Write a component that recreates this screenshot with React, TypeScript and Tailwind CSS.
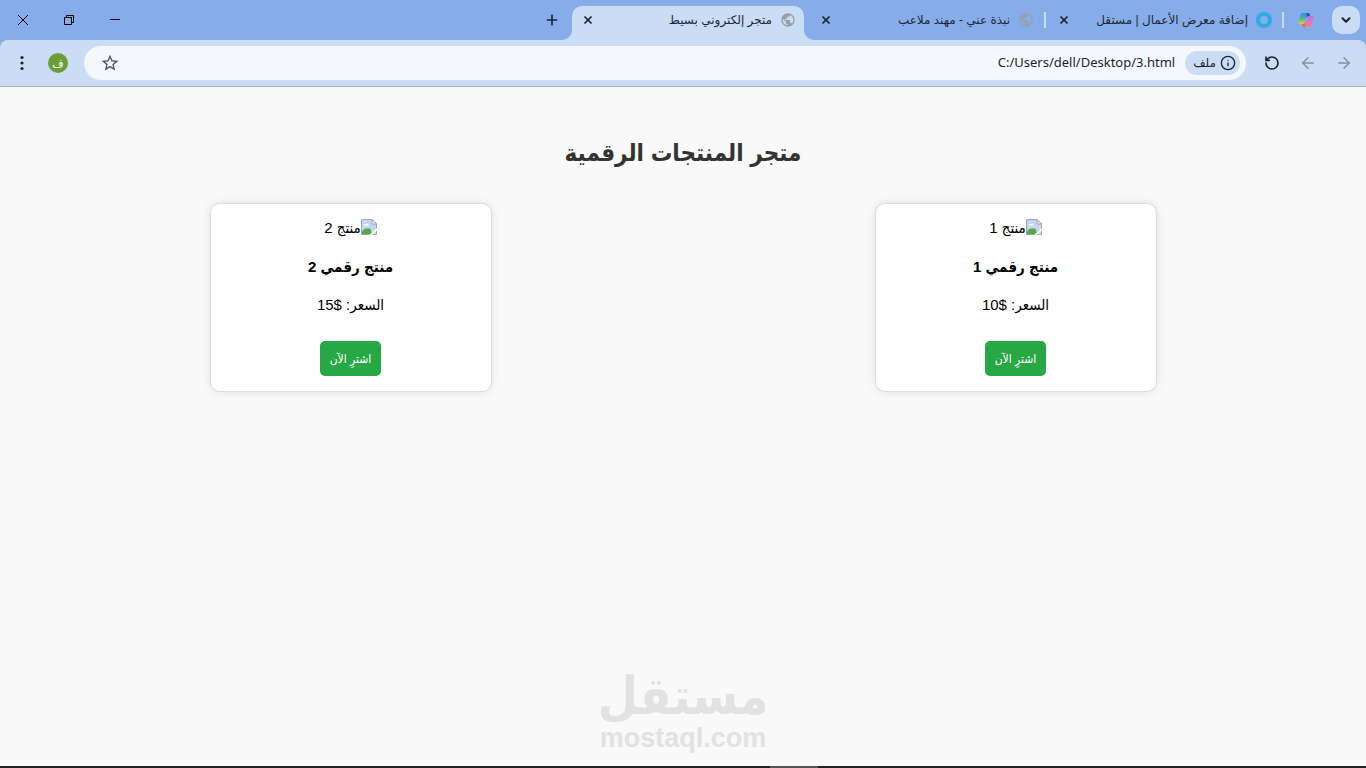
import { ArrowLeft, ArrowRight, ChevronDown, Info, Plus, RotateCcw, X } from 'lucide-react';
import { MdPublic, MdStarOutline } from 'react-icons/md';

type TabData = {
  title: string;
  icon: 'ring' | 'globe';
  active?: boolean;
};

type Product = {
  id: number;
  alt: string;
  name: string;
  price: string;
};

const tabs: TabData[] = [
  { title: 'إضافة معرض الأعمال | مستقل', icon: 'ring' },
  { title: 'نبذة عني - مهند ملاعب', icon: 'globe' },
  { title: 'متجر إلكتروني بسيط', icon: 'globe', active: true },
];

const products: Product[] = [
  { id: 1, alt: 'منتج 1', name: 'منتج رقمي 1', price: 'السعر: $10' },
  { id: 2, alt: 'منتج 2', name: 'منتج رقمي 2', price: 'السعر: $15' },
];

const RingIcon = () => (
  <svg viewBox="0 0 16 16" className="size-4 shrink-0" aria-hidden="true">
    <circle cx="8" cy="8" r="6" fill="none" stroke="#2caae6" strokeWidth="4" />
  </svg>
);

const CopilotIcon = () => (
  <svg viewBox="0 0 16 16" className="size-4" aria-hidden="true">
    <defs>
      <linearGradient id="copilot-left" x1="0" y1="0" x2="0" y2="1">
        <stop offset="0" stopColor="#2a8fe6" />
        <stop offset="0.5" stopColor="#45b79a" />
        <stop offset="1" stopColor="#f0c93a" />
      </linearGradient>
      <linearGradient id="copilot-right" x1="0" y1="0" x2="0" y2="1">
        <stop offset="0" stopColor="#a37af0" />
        <stop offset="0.5" stopColor="#e070cc" />
        <stop offset="1" stopColor="#f8835f" />
      </linearGradient>
    </defs>
    <path d="M5 1h5L7.200 9.800C6.800 11.200 6 12 5 12H2.500C.8 12 .1 10.500.6 9L2.400 3C2.800 1.700 3.700 1 5 1z" fill="url(#copilot-left)" />
    <path d="M11 15H6L8.800 6.200C9.200 4.800 10 4 11 4h2.500c1.700 0 2.400 1.500 1.900 3l-1.800 6c-.4 1.300-1.300 2-2.600 2z" fill="url(#copilot-right)" />
    <path d="M8.500 1H10c1 0 1.400.6 1.700 1.500L12 4h-1c-1 0-1.700.6-2.100 1.800z" fill="#2550bf" />
    <path d="M7.500 15H6c-1 0-1.400-.6-1.700-1.500L4 12h1c1 0 1.700-.6 2.100-1.800z" fill="#f0684f" />
    <path d="M8.100 6.200h1.400L8 10.200H6.500z" fill="#86ade9" />
  </svg>
);

const BrokenImage = () => (
  <svg viewBox="0 0 16 16" className="size-4 shrink-0" aria-hidden="true">
    <path d="M.5.5H11L15.500 5v10.500H.5z" fill="#c3d6f5" stroke="#a0a4aa" />
    <path d="M2.500 6.500c0-1.500 1.500-2 2.300-1 .7-1.500 3.200-1 3 1z" fill="#fff" />
    <path d="M1 15v-2.500C3 9.500 6 8.500 9.500 9.800L11 15z" fill="#58a846" />
    <path d="M16 9 8.500 16H11l5-4.500z" fill="#fff" />
    <path d="M11 .5V5h4.500z" fill="#f2f4f7" stroke="#a0a4aa" />
  </svg>
);

const TabCurve = ({ className }: { className: string }) => (
  <svg viewBox="0 0 10 10" className={`absolute bottom-0 size-2.5 ${className}`} aria-hidden="true">
    <path d="M10 0v10H0A10 10 0 0 0 10 0z" fill="#cbdcf5" />
  </svg>
);

const BrowserTab = ({ tab }: { tab: TabData }) => (
  <div
    className={`relative flex w-58 min-w-0 items-center self-stretch px-2 pb-1.5 ${
      tab.active ? 'rounded-t-[10px] bg-[#cbdcf5]' : ''
    }`}
  >
    {tab.active && (
      <>
        <TabCurve className="-left-2.5" />
        <TabCurve className="-right-2.5 -scale-x-100" />
      </>
    )}
    {tab.icon === 'ring' ? (
      <RingIcon />
    ) : (
      <MdPublic className={`size-4 shrink-0 ${tab.active ? 'text-[#9a9da2]' : 'text-[#96a0ae]'}`} />
    )}
    <span className="mr-2 min-w-0 flex-1 truncate text-xs text-[#1d2735]">{tab.title}</span>
    <button type="button" aria-label="إغلاق علامة التبويب" className="flex size-4 shrink-0 items-center justify-center text-[#1c2430]">
      <X className="size-3" strokeWidth={3.5} />
    </button>
  </div>
);

const TabStrip = () => (
  <div className="flex h-10 items-stretch pr-1.5 pt-1.5">
    <button type="button" aria-label="البحث في علامات التبويب" className="flex size-7 items-center justify-center rounded-[10px] bg-[#cbdcf5] text-[#1c2430]">
      <ChevronDown className="size-3.5" strokeWidth={3.5} />
    </button>
    <div className="mr-4.5 flex h-7 items-center">
      <CopilotIcon />
    </div>
    <div className="mr-3.5 flex gap-0.5">
      {tabs.map((tab) => (
        <div key={tab.title} className="flex gap-0.5">
          <span className={`mt-1.5 h-4 w-0.5 ${tab.active ? '' : 'bg-[#cbdcf5]'}`} />
          <BrowserTab tab={tab} />
        </div>
      ))}
    </div>
    <button type="button" aria-label="علامة تبويب جديدة" className="mr-3 flex h-7 w-4 items-center justify-center text-[#1c2430]">
      <Plus className="size-4" strokeWidth={2.5} />
    </button>
    <div className="mr-auto flex h-7 text-black">
      <button type="button" aria-label="تصغير" className="flex w-11.5 items-center justify-center">
        <svg viewBox="0 0 10 10" className="size-2.5" shapeRendering="crispEdges">
          <path d="M0 4.500h10" stroke="currentColor" />
        </svg>
      </button>
      <button type="button" aria-label="استعادة" className="flex w-11.5 items-center justify-center">
        <svg viewBox="0 0 10 10" className="size-2.5" fill="none" stroke="currentColor">
          <path d="M.5 2.500h7v7h-7zM2.500 2.500v-2h7v7h-2" />
        </svg>
      </button>
      <button type="button" aria-label="إغلاق" className="flex w-11.5 items-center justify-center">
        <svg viewBox="0 0 10 10" className="size-2.5" fill="none" stroke="currentColor">
          <path d="M0 0l10 10M10 0L0 10" />
        </svg>
      </button>
    </div>
  </div>
);

const Toolbar = () => (
  <div className="flex items-center rounded-t-lg border-b border-[#a3b1c7] bg-[#cbdcf5] py-1.5 pl-3.5 pr-[13px]">
    <div className="flex gap-4.5">
      <button type="button" aria-label="إلى الأمام" className="text-[#8390a5]">
        <ArrowRight className="size-4.5" />
      </button>
      <button type="button" aria-label="رجوع" className="text-[#8390a5]">
        <ArrowLeft className="size-4.5" />
      </button>
      <button type="button" aria-label="إعادة التحميل" className="flex size-4.5 items-center justify-center text-[#1c2430]">
        <RotateCcw className="size-4" strokeWidth={2.5} />
      </button>
    </div>
    <div className="mr-[17px] flex h-8.5 min-w-0 flex-1 items-center rounded-full bg-[#f4f8fd] pl-4 pr-1.5">
      <button type="button" className="flex h-6 shrink-0 items-center gap-1 rounded-full bg-[#cbdcf5] pl-2 pr-1 text-xs font-medium text-[#1c2430]">
        <Info className="size-4" />
        ملف
      </button>
      <input
        type="text"
        aria-label="شريط العناوين"
        dir="ltr"
        defaultValue="C:/Users/dell/Desktop/3.html"
        className="mr-2.5 min-w-0 flex-1 bg-transparent text-right font-['Noto_Sans','Open_Sans',sans-serif] text-[13px] text-[#1f2329] outline-none"
      />
      <button type="button" aria-label="إضافة إشارة مرجعية" className="text-[#4b525c]">
        <MdStarOutline className="size-5" />
      </button>
    </div>
    <button type="button" aria-label="الملف الشخصي" className="mr-4 flex size-5 items-center justify-center rounded-full bg-[#689f38] text-[11px] text-white">
      ف
    </button>
    <button type="button" aria-label="القائمة" className="mr-4.5 text-[#1c2430]">
      <svg viewBox="0 0 16 16" className="size-4" fill="currentColor">
        <circle cx="8" cy="2.500" r="1.600" />
        <circle cx="8" cy="8" r="1.600" />
        <circle cx="8" cy="13.500" r="1.600" />
      </svg>
    </button>
  </div>
);

const ProductCard = ({ product }: { product: Product }) => (
  <article className="flex w-[282px] flex-col items-center rounded-[10px] border border-[#dddddd] bg-white p-[15px] text-[15px] text-black shadow-[0_0_10px_rgba(0,0,0,0.1)]">
    <div role="img" aria-label={product.alt} className="flex h-5 items-start">
      <BrokenImage />
      <span className="leading-4.5">{product.alt}</span>
    </div>
    <h3 className="mt-4 text-[15px]/6 font-bold">{product.name}</h3>
    <p className="mt-4 leading-5">{product.price}</p>
    <button type="button" className="mt-6.5 h-[35px] rounded-[5px] bg-[#28a745] px-2.5 text-xs text-white">
      اشترِ الآن
    </button>
  </article>
);

export default function App() {
  return (
    <div dir="rtl" className="flex min-h-screen flex-col bg-[#f9f9f9] font-['Liberation_Sans','DejaVu_Sans',sans-serif]">
      <header className="bg-[#86ade9]">
        <TabStrip />
        <Toolbar />
      </header>
      <main className="flex flex-1 flex-col px-[18px] font-['Liberation_Sans','DejaVu_Sans_Condensed',sans-serif]">
        <h1 className="mt-12 text-center text-2xl/9 font-bold text-[#333333]">متجر المنتجات الرقمية</h1>
        <div className="mt-8 flex flex-wrap justify-around gap-y-8">
          {products.map((product) => (
            <ProductCard key={product.id} product={product} />
          ))}
        </div>
        <div className="mt-auto flex flex-col items-center pb-3.5 font-bold text-[#e2e2e2]">
          <span className="text-[52px]/14">مستقل</span>
          <span className="text-[27px]/7">mostaql.com</span>
        </div>
      </main>
      <footer className="flex h-0.5 justify-center bg-[#232327]">
        <span className="ml-[222px] w-12 bg-[#555558]" />
      </footer>
    </div>
  );
}
